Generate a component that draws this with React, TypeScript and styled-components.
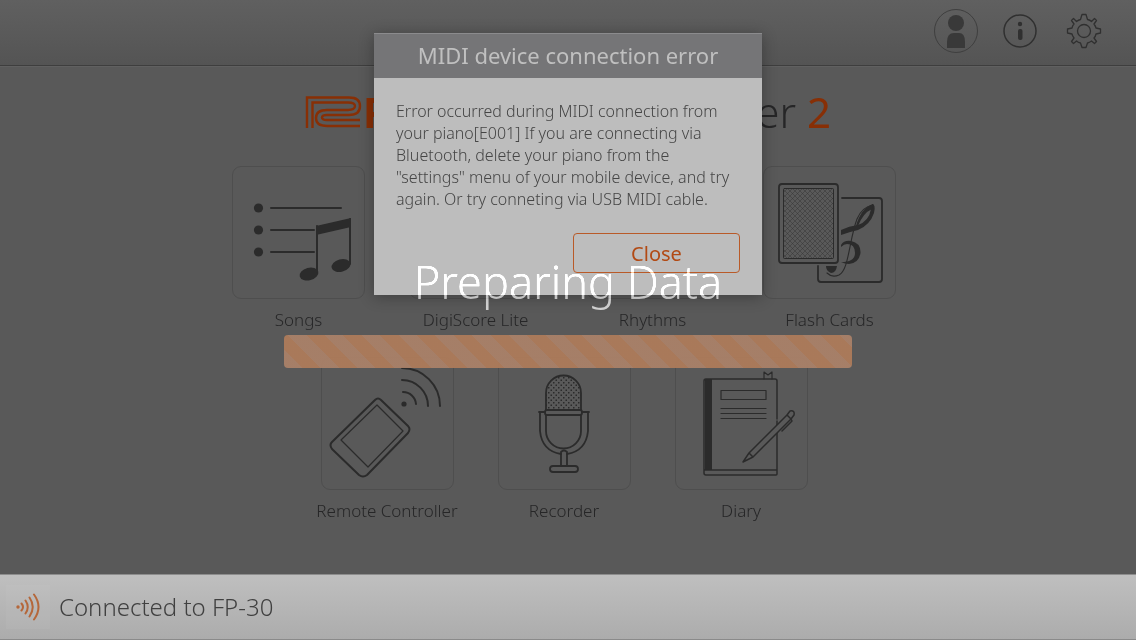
import React from "react";
import styled, { createGlobalStyle } from "styled-components";

const Global = createGlobalStyle`
  *, *::before, *::after { box-sizing: border-box; }
  html, body, #root { height: 100%; }
  body {
    margin: 0;
    background: #595959;
    color: #262627;
    font-family: "Noto Sans", "Open Sans", sans-serif;
    font-weight: 300;
  }
`;

const Screen = styled.div`
  position: relative;
  display: flex;
  flex-direction: column;
  min-height: 100%;
  overflow: hidden;
`;

const TopBar = styled.header`
  display: flex;
  justify-content: flex-end;
  align-items: center;
  gap: 20px;
  height: 66px;
  padding: 0 30px 4px 0;
  background: linear-gradient(#606060, #545454);
  border-bottom: 1px solid #3e3e3e;
`;

const IconButton = styled.button`
  display: grid;
  place-items: center;
  width: 44px;
  height: 44px;
  padding: 0;
  border: 0;
  background: none;
  color: #353535;
`;

const Home = styled.main`
  flex: 1;
  display: flex;
  flex-direction: column;
  align-items: center;
  padding-top: 22px;
  border-top: 1px solid #606060;
`;

const Title = styled.h1`
  display: flex;
  align-items: center;
  justify-content: space-between;
  width: 526px;
  height: 46px;
  margin: 0;
  font-weight: 300;
  font-size: 42px;
  line-height: 46px;
`;

const Brand = styled.span`
  display: flex;
  align-items: center;
  color: #882f05;
  font-weight: 700;
`;

const Edition = styled.span`
  color: #882f05;
  font-weight: 400;
`;

const Tiles = styled.nav`
  display: flex;
  flex-direction: column;
  gap: 27px;
  padding: 31px 8px 0 0;
`;

const TileRow = styled.div`
  display: flex;
  justify-content: center;
  gap: 44px;
`;

const Tile = styled.button`
  display: flex;
  flex-direction: column;
  align-items: center;
  gap: 11px;
  width: 133px;
  padding: 0;
  border: 0;
  background: none;
  color: inherit;
  font: inherit;
  font-size: 17px;
  line-height: 20px;
  white-space: nowrap;
`;

const TileArt = styled.span`
  display: block;
  width: 133px;
  height: 133px;
  border: 1px solid #4e4e4e;
  border-radius: 9px;
  svg { display: block; margin: -1px; }
`;

const StatusBar = styled.footer`
  display: flex;
  align-items: center;
  gap: 9px;
  height: 66px;
  padding-left: 6px;
  background: linear-gradient(#bfbfbf, #acacac);
  border-top: 1px solid #8d8d8d;
  border-bottom: 1px solid #8a8a8a;
  color: #404040;
  font-size: 24px;
  line-height: 32px;
`;

const Signal = styled.span`
  display: grid;
  place-items: center;
  width: 44px;
  height: 44px;
  background: rgba(255, 255, 255, 0.04);
`;

const ModalLayer = styled.div`
  position: absolute;
  inset: 0;
  display: flex;
  justify-content: center;
  align-items: flex-start;
  padding-top: 33px;
`;

const Dialog = styled.section`
  width: 388px;
  background: #bdbdbd;
  box-shadow: 0 2px 14px rgba(0, 0, 0, 0.3);
`;

const DialogTitle = styled.h2`
  margin: 0;
  border-top: 1px solid #8b8b8d;
  padding-bottom: 2px;
  background: #757577;
  color: #c0c0c0;
  text-align: center;
  font-weight: 400;
  font-size: 22px;
  line-height: 42px;
`;

const DialogBody = styled.div`
  display: flex;
  flex-direction: column;
  align-items: flex-end;
  gap: 23px;
  padding: 22px;
`;

const Message = styled.p`
  width: 100%;
  margin: 0;
  color: #454545;
  font-size: 16px;
  line-height: 22px;
`;

const CloseButton = styled.button`
  width: 167px;
  height: 40px;
  padding: 0;
  border: 1px solid #b95a28;
  border-radius: 4px;
  background: none;
  color: #b24a14;
  font: inherit;
  font-weight: 400;
  font-size: 20px;
`;

const LoadingLayer = styled.div`
  position: absolute;
  inset: 0;
  display: flex;
  flex-direction: column;
  align-items: center;
  gap: 23px;
  padding-top: 252px;
  pointer-events: none;
`;

const LoadingText = styled.p`
  margin: 0;
  color: #787878;
  font-size: 45px;
  line-height: 60px;
  mix-blend-mode: plus-lighter;
`;

const Bar = styled.div`
  width: 50%;
  height: 33px;
  border-radius: 4px;
  opacity: 0.92;
  background: repeating-linear-gradient(45deg, #ac8269 0 13px, #b07c5a 13px 26px);
`;

const BrandMark = () => (
  <svg width="58" height="32" viewBox="-1 0 58 32" fill="none" stroke="currentColor" strokeWidth="2.400" aria-hidden="true">
    <path d="M1 32V1.500H43Q54 1.500 54 10Q54 19 43 19H21Q16 19 16 21.500Q16 24 21 24H54" />
    <path d="M6.500 32V6.500H42Q49 6.500 49 10Q49 14 42 14H21Q10 14 10 22Q10 30 21 30H54" />
  </svg>
);

const line = { fill: "none", stroke: "#2b2b2b", strokeLinecap: "round" as const, strokeLinejoin: "round" as const };

const Art = ({ shift = 0, children }: { shift?: number; children?: React.ReactNode }) => (
  <svg width="133" height="133" viewBox={`${-shift} 0 133 133`} aria-hidden="true">{children}</svg>
);

const SongsArt = () => (
  <Art shift={-1}>
    <g fill="#2b2b2b">
      <circle cx="27.500" cy="42" r="4.600" /><circle cx="27.500" cy="64" r="4.600" /><circle cx="27.500" cy="86" r="4.600" />
      <path d="M85 60L120 52V61L85 69Z" />
      <ellipse cx="78" cy="108" rx="9.600" ry="6.300" transform="rotate(-15 78 108)" />
      <ellipse cx="110" cy="99.500" rx="9.600" ry="6.300" transform="rotate(-15 110 99.5)" />
    </g>
    <g {...line} strokeWidth="2"><path d="M40 42H110M40 64H83M40 86H83M86 60V106M119 53V98" /></g>
  </Art>
);

const CardsArt = () => (
  <Art shift={2}>
    <defs>
      <pattern id="lattice" width="5" height="5" patternUnits="userSpaceOnUse">
        <path d="M0 0L5 5M5 0L0 5" stroke="#353535" strokeWidth="0.500" />
      </pattern>
    </defs>
    <g {...line} strokeWidth="1.800">
      <rect x="14" y="18" width="59" height="79" rx="3" />
      <rect x="18.500" y="22.500" width="50" height="70" rx="1" fill="url(#lattice)" strokeWidth="1" />
      <path d="M77 32H114Q117 32 117 35V113Q117 116 114 116H56Q53 116 53 113V100" />
      <path d="M62 107Q67 112 74 109C84 104 84 74 92 53Q97 41 108 39" strokeWidth="1.100" />
    </g>
    <g fill="#2b2b2b">
      <path d="M76 64Q84 60 93 59Q104 55 106 43L107 38Q111 38 109 47Q105 59 93 64Q84 66 76 69Z" />
      <path d="M108 38Q96 42 91 60L93 60Q98 47 107 43Z" />
      <path d="M76 79Q79 74 86 75Q96 77 95.500 87Q94 97 84 98Q80 98 76 96Q90 96 90 87Q90 78 82 78Q79 78 76 81Z" />
      <path d="M61 100H72Q71 107 66 107Q61 105 61 100Z" />
    </g>
  </Art>
);

const RemoteArt = () => (
  <Art shift={-1}>
    <g {...line} strokeWidth="2">
      <path d="M55 43Q58 40 61 43L88 69Q91 72 88 76L47 118Q43 121 39 118L12 92Q9 88 12 85Z" />
      <path d="M57 48L83 74L48 110L21 83Z" strokeWidth="1.200" />
      <path d="M82 11A38 38 0 0 1 120 49M82 23A26 26 0 0 1 108 49M83 35A13 13 0 0 1 96 47" />
    </g>
    <circle cx="84" cy="47" r="2.600" fill="#2b2b2b" />
  </Art>
);

const RecorderArt = () => (
  <Art>
    <defs>
      <pattern id="mesh" width="5" height="5" patternUnits="userSpaceOnUse">
        <path d="M0 0h1.500v1.500h-1.500zM2.500 2.500h1.500v1.500h-1.500z" fill="#2b2b2b" />
      </pattern>
    </defs>
    <g {...line} strokeWidth="1.800">
      <path d="M48 53V36A17.500 17.500 0 0 1 83 36V53" fill="url(#mesh)" />
      <rect x="47" y="53" width="37" height="5" rx="2" />
      <path d="M48 58V74A17.500 17.500 0 0 0 83 74V58" />
      <path d="M41 55H47M84 55H91M42 56V74Q44 94 63 97M90 56V74Q88 94 69 97" />
      <path d="M63 109V95Q66 92 69 95V109" />
      <rect x="52" y="109" width="28" height="6" rx="3" />
    </g>
  </Art>
);

const DiaryArt = () => (
  <Art>
    <path d="M30 22H37V113H30Z" fill="#2b2b2b" />
    <g {...line} strokeWidth="1.500">
      <path d="M102 64V117Q102 118 101 118H31Q29 118 29 116V24Q29 22 31 22H100Q102 22 102 24V62M30 113H102" />
      <path d="M46 33.500H91V42.500H46ZM46 51.500H91M46 56.500H91M46 61.500H91" strokeWidth="1.200" />
      <path d="M89 22V15L93 18L97 15V22" strokeWidth="1.200" />
      <path d="M74 96L112 58L116 62L78 100L68 105ZM74 96L78 100M112 58L115 54Q120 53 119 58L116 62L117 64L107 74" fill="#595959" />
    </g>
  </Art>
);

const rows = [
  [
    { label: "Songs", art: <SongsArt /> },
    { label: "DigiScore Lite", art: <Art /> },
    { label: "Rhythms", art: <Art /> },
    { label: "Flash Cards", art: <CardsArt /> },
  ],
  [
    { label: "Remote Controller", art: <RemoteArt /> },
    { label: "Recorder", art: <RecorderArt /> },
    { label: "Diary", art: <DiaryArt /> },
  ],
];

export default function App() {
  return (
    <>
      <Global />
      <Screen>
        <TopBar>
          <IconButton aria-label="Profile">
            <svg width="44" height="44" viewBox="0 0 44 44">
              <circle cx="22" cy="22" r="21.500" fill="none" stroke="#3f3f3f" />
              <circle cx="22" cy="14" r="8" fill="#393939" />
              <path d="M13 39V33Q13 24 20 24H25Q31 24 31 33V39Z" fill="#393939" />
            </svg>
          </IconButton>
          <IconButton aria-label="Information">
            <svg width="34" height="34" viewBox="0 0 34 34">
              <circle cx="17" cy="17" r="16" fill="none" stroke="#303030" strokeWidth="1.500" />
              <circle cx="17" cy="10" r="2.200" fill="#303030" />
              <rect x="15" y="15" width="4.500" height="11" rx="2" fill="#303030" />
            </svg>
          </IconButton>
          <IconButton aria-label="Settings">
            <svg width="36" height="36" viewBox="-18 -18 36 36" fill="none" stroke="#303030" strokeWidth="1.300" strokeLinejoin="round">
              <circle r="6.500" />
              <path d="M-2 -16.500H2L3.500 -11.500Q6 -11 7.500 -9.500L10.500 -12.500L12.500 -10.500L10 -7Q11.500 -5 12 -3L16.500 -2V2L12 3Q11.500 5.500 10 7L12.500 10.500L10.500 12.500L7.500 10Q5.500 11.500 3.500 12L2 16.500H-2L-3.500 12Q-6 11.500 -7.500 10L-10.500 12.500L-12.500 10.500L-10 7Q-11.500 5 -12 3L-16.500 2V-2L-12 -3Q-11.500 -5.500 -10 -7L-12.500 -10.500L-10.500 -12.500L-7.500 -9.500Q-5.500 -11 -3.500 -11.500Z" />
            </svg>
          </IconButton>
        </TopBar>
        <Home>
          <Title>
            <Brand><BrandMark />Roland</Brand>
            <span>Partner <Edition>2</Edition></span>
          </Title>
          <Tiles aria-label="Features">
            {rows.map((row, i) => (
              <TileRow key={i}>
                {row.map((t) => (
                  <Tile key={t.label}><TileArt>{t.art}</TileArt>{t.label}</Tile>
                ))}
              </TileRow>
            ))}
          </Tiles>
        </Home>
        <StatusBar>
          <Signal>
            <svg width="26" height="28" viewBox="0 0 26 28" fill="none" stroke="#b5673a" strokeWidth="2" strokeLinecap="round" aria-hidden="true">
              <circle cx="3" cy="14" r="1.700" fill="#b5673a" stroke="none" />
              <path d="M6.500 10.500Q9.500 14 6.500 17.500M10.500 7.500Q15 14 10.500 20.500M14.500 4.500Q21 14 14.500 23.500M19 1.500Q28 14 19 26.500" />
            </svg>
          </Signal>
          Connected to FP-30
        </StatusBar>
        <ModalLayer>
          <Dialog role="alertdialog" aria-labelledby="dialog-title">
            <DialogTitle id="dialog-title">MIDI device connection error</DialogTitle>
            <DialogBody>
              <Message>
                Error occurred during MIDI connection from your piano[E001] If you are connecting via Bluetooth, delete your piano from the "settings" menu of your mobile device, and try again. Or try conneting via USB MIDI cable.
              </Message>
              <CloseButton>Close</CloseButton>
            </DialogBody>
          </Dialog>
        </ModalLayer>
        <LoadingLayer role="status">
          <LoadingText>Preparing Data</LoadingText>
          <Bar />
        </LoadingLayer>
      </Screen>
    </>
  );
}
